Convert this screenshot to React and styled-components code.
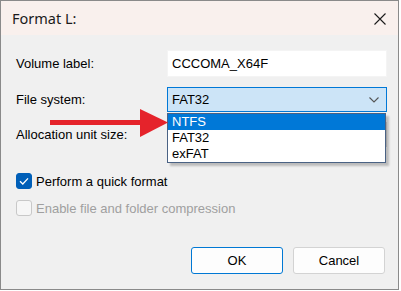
import React from 'react';
import styled, { createGlobalStyle } from 'styled-components';

const GlobalStyle = createGlobalStyle`
  html, body {
    margin: 0;
    padding: 0;
    background: #ffffff;
  }
  body {
    font-family: "Liberation Sans", Arial, sans-serif;
    font-size: 13px;
    color: #000;
  }
`;

const App = () => {
  return (
    <>
      <GlobalStyle />
      <Window>
        <TitleBar>
          <Title>Format L:</Title>
          <CloseIcon viewBox="0 0 12 12">
            <path d="M0.5 0.5 L11.5 11.5 M11.5 0.5 L0.5 11.5" />
          </CloseIcon>
        </TitleBar>

        <Body>
          <Form>
            <Label>Volume label:</Label>
            <TextBox>CCCOMA_X64F</TextBox>

            <Label>File system:</Label>
            <ComboWrap>
              <Combo $open>
                <span>FAT32</span>
                <Chevron viewBox="0 0 10 6">
                  <path d="M0.5 0.5 L5 5 L9.5 0.5" />
                </Chevron>
              </Combo>
              <DropList>
                <Option $selected>NTFS</Option>
                <Option>FAT32</Option>
                <Option>exFAT</Option>
              </DropList>
            </ComboWrap>

            <Label>Allocation unit size:</Label>
            <Combo />
          </Form>

          <Checks>
            <CheckRow>
              <Box $checked>
                <svg viewBox="0 0 16 16" width="16" height="16">
                  <path d="M4 8.2 L6.8 11 L12 5.4" fill="none" stroke="#fff" strokeWidth="1.3" />
                </svg>
              </Box>
              <span>Perform a quick format</span>
            </CheckRow>
            <CheckRow $disabled>
              <Box />
              <span>Enable file and folder compression</span>
            </CheckRow>
          </Checks>

          <Buttons>
            <Button $primary>OK</Button>
            <Button>Cancel</Button>
          </Buttons>
        </Body>

        <Arrow viewBox="0 0 120 34" width="120" height="34">
          <rect x="0" y="13" width="94" height="5" fill="#e5232b" />
          <polygon points="90,2 118,15.5 90,30" fill="#e5232b" />
        </Arrow>
      </Window>
    </>
  );
};

const Window = styled.div`
  position: relative;
  box-sizing: border-box;
  width: 399px;
  height: 290px;
  border: 1px solid #8a8a8a;
  background: #f0f0f0;
  display: flex;
  flex-direction: column;
`;

const TitleBar = styled.div`
  height: 34px;
  background: #f9f0ed;
  display: flex;
  align-items: center;
  justify-content: space-between;
  padding: 0 12px 0 11px;
`;

const Title = styled.span`
  font-family: "Noto Sans", sans-serif;
  font-size: 14.5px;
  color: #1b1b1b;
`;

const CloseIcon = styled.svg`
  width: 12px;
  height: 12px;
  margin-top: 1px;
  path {
    stroke: #1b1b1b;
    stroke-width: 1.1;
    fill: none;
  }
`;

const Body = styled.div`
  flex: 1;
  display: flex;
  flex-direction: column;
  padding: 15px 12px 0 15px;
`;

const Form = styled.div`
  display: grid;
  grid-template-columns: 151px 220px;
  grid-template-rows: 27px 25px 25px;
  row-gap: 10px;
  align-items: center;
`;

const Label = styled.span`
  line-height: 16px;
`;

const TextBox = styled.div`
  box-sizing: border-box;
  height: 27px;
  background: #fff;
  border: 1px solid #f4f4f4;
  padding: 0 4px;
  display: flex;
  align-items: center;
`;

const ComboWrap = styled.div`
  position: relative;
  height: 25px;
`;

const Combo = styled.div`
  box-sizing: border-box;
  height: 25px;
  display: flex;
  align-items: center;
  justify-content: space-between;
  padding: 0 7px 0 4px;
  background: ${(p) => (p.$open ? '#cce4f7' : '#fdfdfd')};
  border: 1px solid ${(p) => (p.$open ? '#0078d7' : '#d0d0d0')};
`;

const Chevron = styled.svg`
  width: 10px;
  height: 6px;
  path {
    stroke: #555;
    stroke-width: 1.1;
    fill: none;
  }
`;

const DropList = styled.div`
  position: absolute;
  top: calc(100% + 1px);
  left: 0;
  width: 219px;
  box-sizing: border-box;
  background: #fff;
  border: 1px solid #4a6284;
  box-shadow: 3px 3px 2px rgba(0, 0, 0, 0.22);
  z-index: 2;
`;

const Option = styled.div`
  height: 16px;
  line-height: 16px;
  padding-left: 4px;
  background: ${(p) => (p.$selected ? '#0078d7' : 'transparent')};
  color: ${(p) => (p.$selected ? '#fff' : '#000')};
`;

const Checks = styled.div`
  display: flex;
  flex-direction: column;
  gap: 11px;
  margin-top: 26px;
`;

const CheckRow = styled.label`
  display: flex;
  align-items: center;
  gap: 4px;
  height: 16px;
  color: ${(p) => (p.$disabled ? '#9f9f9f' : '#000')};
`;

const Box = styled.span`
  box-sizing: border-box;
  width: 16px;
  height: 16px;
  border-radius: 3px;
  display: flex;
  background: ${(p) => (p.$checked ? '#005fb8' : '#f6f6f6')};
  border: 1px solid ${(p) => (p.$checked ? '#005fb8' : '#c8c8c8')};
  svg {
    margin: -1px;
  }
`;

const Buttons = styled.div`
  display: flex;
  justify-content: flex-end;
  gap: 10px;
  margin-top: 31px;
  padding-right: 1px;
`;

const Button = styled.button`
  box-sizing: border-box;
  width: 92px;
  height: 27px;
  font-family: "Liberation Sans", Arial, sans-serif;
  font-size: 13px;
  color: #000;
  background: #fdfdfd;
  border: 1px solid ${(p) => (p.$primary ? '#0078d4' : '#d3d3d3')};
  border-radius: 3px;
  padding: 0;
`;

const Arrow = styled.svg`
  position: absolute;
  left: 49px;
  top: 106px;
  z-index: 3;
`;

export default App;
